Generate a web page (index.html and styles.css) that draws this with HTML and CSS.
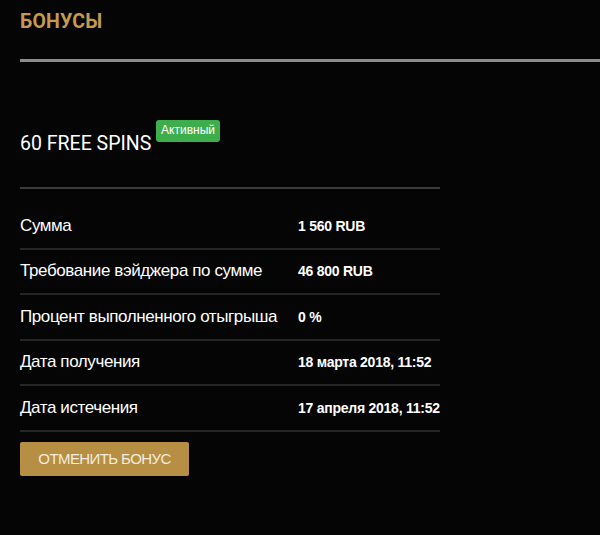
FILE: index.html
```html
<!DOCTYPE html>
<html lang="ru">
<head>
  <meta charset="UTF-8">
  <meta name="viewport" content="width=device-width, initial-scale=1.0">
  <title>Бонусы</title>
  <link rel="stylesheet" href="styles.css">
</head>
<body>
  <header>
    <h1>Бонусы</h1>
  </header>
  <main>
    <div class="bonus">
      <h2>60 FREE SPINS <span class="badge">Активный</span></h2>
      <div class="details">
        <div class="row"><span class="label">Сумма</span><span class="value">1 560 RUB</span></div>
        <div class="row"><span class="label">Требование вэйджера по сумме</span><span class="value">46 800 RUB</span></div>
        <div class="row"><span class="label">Процент выполненного отыгрыша</span><span class="value">0 %</span></div>
        <div class="row"><span class="label">Дата получения</span><span class="value">18 марта 2018, 11:52</span></div>
        <div class="row"><span class="label">Дата истечения</span><span class="value">17 апреля 2018, 11:52</span></div>
      </div>
      <button type="button">Отменить бонус</button>
    </div>
  </main>
</body>
</html>
```

FILE: styles.css
```css
body {
  font-family: "Liberation Sans", Arial, sans-serif;
  margin: 0;
  padding: 0;
  background: #050505;
  color: #fff;
}
header {
  margin-left: 20px;
  padding-top: 10px;
  border-bottom: 3px solid #8c8c8c;
  height: 49px;
}
header h1 {
  margin: 0;
  font-family: Roboto, sans-serif;
  font-size: 19.5px;
  font-weight: bold;
  text-transform: uppercase;
  color: #c49a4e;
  letter-spacing: 0.2px;
}
main {
  padding: 0 20px;
}
.bonus {
  width: 420px;
}
.bonus h2 {
  margin: 68px 0 0;
  padding-top: 2px;
  font-family: Roboto, sans-serif;
  font-size: 19.5px;
  font-weight: normal;
  height: 55px;
  border-bottom: 2px solid #3a3a3a;
}
.badge {
  display: inline-block;
  position: relative;
  top: -16px;
  background: #3dae4b;
  color: #fff;
  font-family: "Liberation Sans", Arial, sans-serif;
  font-size: 12px;
  padding: 3px 5px 5px;
  border-radius: 3px;
}
.details {
  margin-top: 15px;
}
.row {
  display: flex;
  align-items: center;
  height: 43.5px;
  border-bottom: 2px solid #262626;
}
.label {
  width: 278px;
  font-size: 17px;
  letter-spacing: -0.4px;
}
.value {
  font-size: 14px;
  font-weight: bold;
  letter-spacing: -0.25px;
}
button {
  margin-top: 10px;
  width: 169px;
  height: 34px;
  background: #b68f45;
  color: #f4ecdc;
  border: none;
  border-radius: 2px;
  font-family: "Liberation Sans", Arial, sans-serif;
  font-size: 15px;
  text-transform: uppercase;
  letter-spacing: -0.6px;
}
```
